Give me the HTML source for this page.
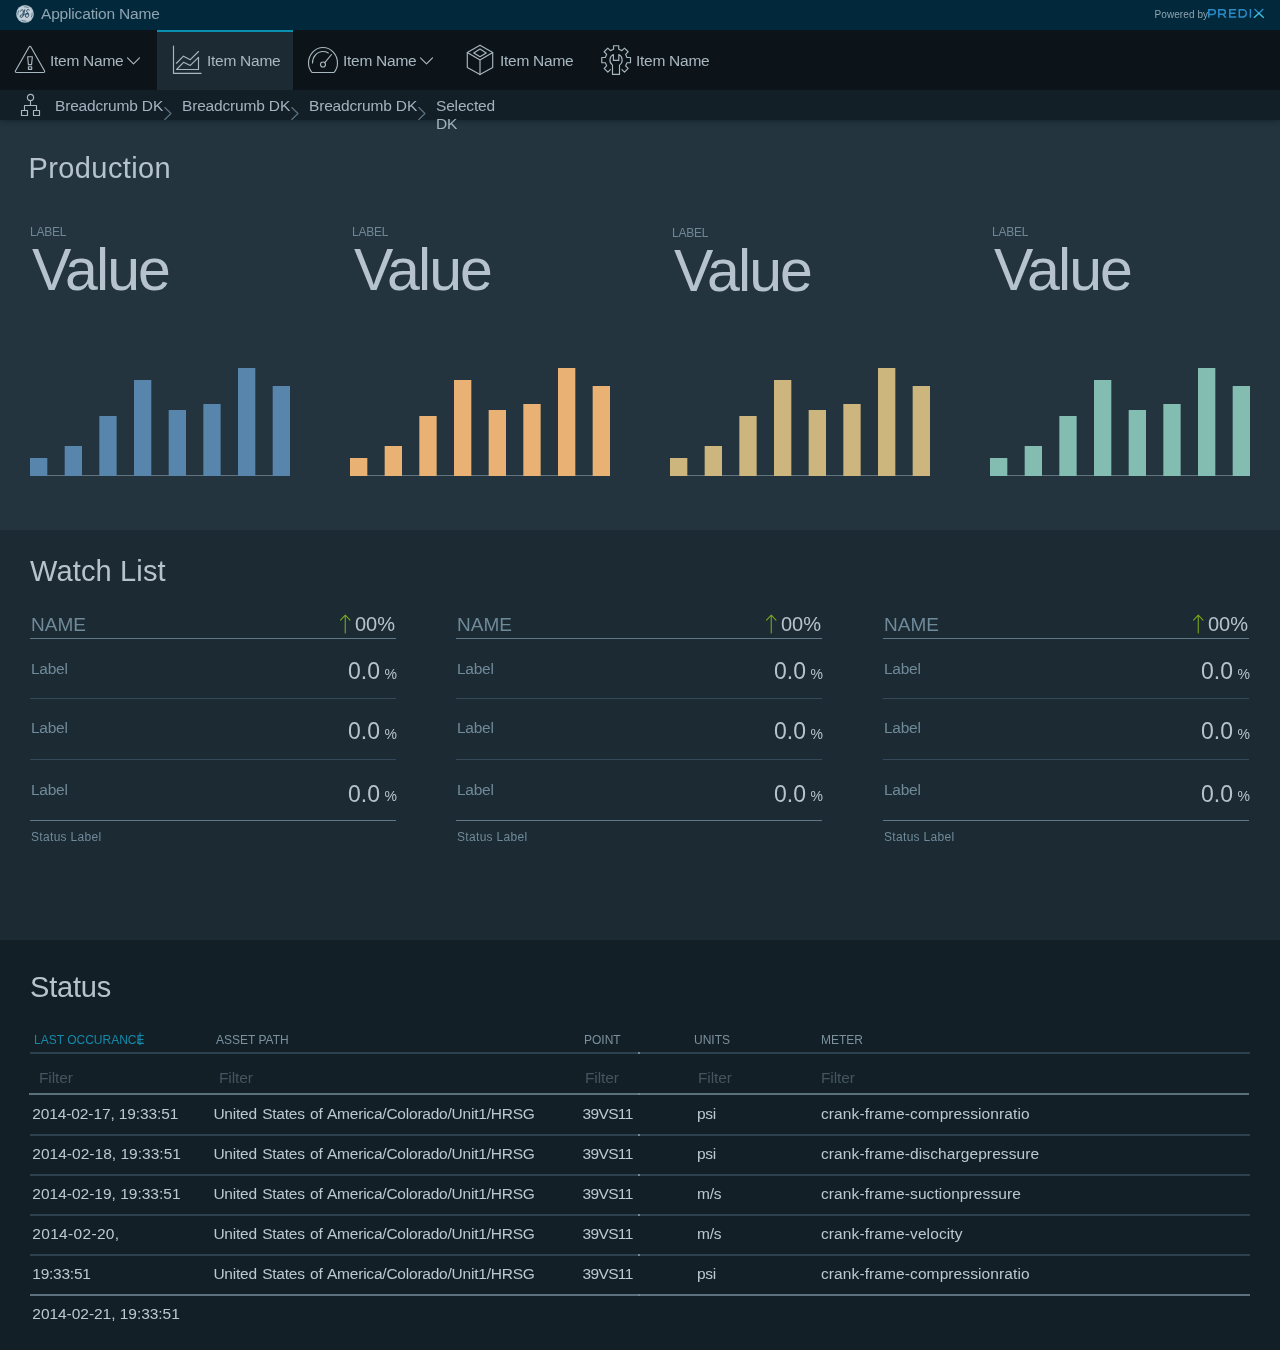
<!DOCTYPE html>
<html><head><meta charset="utf-8"><title>Dashboard</title>
<style>
*{box-sizing:border-box;margin:0;padding:0}
html,body{width:1280px;height:1350px;overflow:hidden;background:#121f27}
body{font-family:"Liberation Sans",sans-serif;position:relative;color:#b6c3cc}
#top,#nav,#crumbs,#prod,#watch,#status{will-change:transform}
.abs{position:absolute;white-space:nowrap}
#top{position:absolute;left:0;top:0;width:1280px;height:30px;background:#02293b}
#nav{z-index:6;position:absolute;left:0;top:30px;width:1280px;height:60px;background:#0c1419}
#crumbs{z-index:5;box-shadow:0 1px 5px rgba(0,0,0,.32);position:absolute;left:0;top:90px;width:1280px;height:30px;background:#121f27}
#prod{position:absolute;left:0;top:120px;width:1280px;height:410px;background:#23343f}
#watch{position:absolute;left:0;top:530px;width:1280px;height:410px;background:#1c2a33}
#status{position:absolute;left:0;top:940px;width:1280px;height:410px;background:#121f27}
.appname{left:41px;top:5px;font-size:15.500px;line-height:18px;color:#8fa3b0;letter-spacing:-.17px}
.powered{left:1154.500px;top:9px;font-size:10px;line-height:12px;color:#8fa3b0;letter-spacing:.08px}
.navtxt{font-size:15.500px;line-height:18px;color:#a9b7c1;top:22px;letter-spacing:-.27px}
.sel{position:absolute;left:157px;top:0;width:136px;height:60px;background:#1c2a33;border-top:2px solid #0a8fb0}
svg{position:absolute;overflow:visible}
.ic{fill:none;stroke:#a9b7c1;stroke-width:1.150;stroke-linecap:round;stroke-linejoin:round}
.bc{font-size:15.500px;line-height:18px;color:#a3b2be;top:7px;letter-spacing:-.17px}
.h1{font-size:29px;line-height:34px;color:#b6c3cc;left:30px}
.lab{font-size:12px;line-height:14px;color:#6f8795;letter-spacing:-.25px}
.val{font-size:59px;line-height:60px;color:#b6c3cc;letter-spacing:-1.9px}
.ln{position:absolute;height:1px}
.wname{font-size:19px;line-height:22px;color:#6f8a99}
.wpct{font-size:20px;line-height:22px;color:#b6c3cc}
.wlab{font-size:15.500px;line-height:18px;color:#6f8a99;letter-spacing:-.25px}
.wval{font-size:23px;line-height:26px;color:#b6c3cc}
.wsm{font-size:14px;line-height:16px;color:#b6c3cc}
.wst{font-size:12px;line-height:14px;color:#6f8a99;letter-spacing:.32px}
.th{font-size:12px;line-height:14px;color:#7b919e}
.fl{font-size:15.500px;line-height:18px;color:#44555f;letter-spacing:-.1px}
.td{font-size:15.500px;line-height:18px;color:#bcc8d0;letter-spacing:-.25px}
</style></head><body>
<div id="top">
<svg style="left:16px;top:5px" width="18" height="18" viewBox="0 0 18 18"><circle cx="9" cy="8.900" r="8.900" fill="#a9bcc8"/><circle cx="9" cy="8.900" r="7.900" fill="#c3d0d9"/><g fill="none" stroke="#1b4258" stroke-linecap="round"><circle cx="9" cy="8.900" r="7.100" stroke-width=".6" stroke-dasharray="4.200 6.950" stroke-dashoffset="1"/><path d="M4.300 6.300c.8-1.900 2.900-1.900 3.100-.3.200 1.500-1.100 2.500-.5 3.400M8.800 4.700C8 7.700 7.700 10.300 6.600 11.700c-.9 1.200-2.700.8-2.500-.6.200-1.300 2-1.700 2.900-.8" stroke-width=".95"/><path d="M13.200 4.900c-1-.8-2.400-.2-2.500 1-.1 1.100.8 1.600 1.400 2.400 1 1.300.8 3.300-.6 3.900-1.400.5-2.600-.7-2.100-2.100.4-1.300 2.100-1.700 3-.7M8.700 9.300l3.300-.9" stroke-width=".95"/></g></svg>
<div class="abs appname">Application Name</div>
<div class="abs powered">Powered by</div>
<svg style="left:1208px;top:9.300px" width="57" height="9" viewBox="0 0 57 9" fill="none" stroke="#2a8bc9" stroke-width="1.500" stroke-linejoin="miter"><path d="M.8 8.700V.8H5a2.300 2.300 0 0 1 0 4.600H.8"/><path d="M10.800 8.700V.8H15.100a2.250 2.250 0 0 1 0 4.500H10.800M14.900 5.300 17.800 8.700"/><path d="M28.200.8H21.800V7.900H28.200M21.800 4.350H27.400"/><path d="M31.300.8H34.800a3.550 3.550 0 0 1 0 7.100H31.300Z"/><path d="M42.400 0V8.700"/><path d="M46.500 0 50.900 4.200 55.300 0" stroke-width="1.350"/><path d="M46 8.700 50.900 4.200 55.800 8.700" stroke="#3fc4df" stroke-width="1.350"/></svg>
</div>
<div id="nav"><div class="sel"></div>
<svg style="left:14px;top:15px" width="32" height="30" viewBox="0 0 32 30" class="ic"><path d="M14.92 2.21Q16.00 0.30 17.08 2.21L30.32 25.59Q31.40 27.50 29.20 27.50L2.80 27.50Q0.60 27.50 1.68 25.59Z"/><path d="M13.650 11.700H18.350L17.550 19.650H14.400Z M14.400 21.700h3.300v2.600h-3.300z"/></svg>
<div class="abs navtxt" style="left:50px">Item Name</div><svg style="left:127px;top:27px" width="13" height="8" viewBox="0 0 13 8" class="ic"><path d="M.5.800 6.500 6.800 12.500.800"/></svg>
<svg style="left:172px;top:15px" width="30" height="30" viewBox="0 0 30 30" class="ic"><path d="M1.500 1.100V28.400H29.100"/><path d="M4.400 18.250 11.500 11.200 18.300 14.650 26.500 6.500"/><path d="M4.600 24.500 11.500 17.300 18.300 20.400 26.500 12.300V24.500Z"/></svg>
<div class="abs navtxt" style="left:207px">Item Name</div>
<svg style="left:307px;top:15px" width="32" height="30" viewBox="0 0 32 30" class="ic"><path d="M5 27.500h22c2.200-2.600 3.500-5.800 3.500-9.500C30.500 9.500 24 2.500 16 2.500S1.500 9.500 1.500 18c0 3.700 1.300 6.900 3.500 9.500Z"/><path d="M5.500 18C5.500 11.500 10 6.500 16 6.500c2 0 3.800.5 5.300 1.400"/><circle cx="16" cy="19.500" r="2.500"/><path d="M17.800 17.600 24.500 9.500"/></svg>
<div class="abs navtxt" style="left:343px">Item Name</div><svg style="left:420px;top:27px" width="13" height="8" viewBox="0 0 13 8" class="ic"><path d="M.5.800 6.500 6.800 12.500.800"/></svg>
<svg style="left:466px;top:14px" width="28" height="32" viewBox="0 0 28 32" class="ic"><path d="M14 1.200 26.700 8.500v15L14 30.600 1.300 23.500v-15Z"/><path d="M1.300 8.500 14 16 26.700 8.500M14 16v14.600"/><path d="M14 5 20.250 8.900 14 12.800 7.750 8.900Z"/></svg>
<div class="abs navtxt" style="left:500px">Item Name</div>
<svg style="left:600px;top:14px" width="32" height="32" viewBox="0 0 32 32" class="ic"><path d="M10.36 25.57 L7.83 28.10 L4.15 24.42 L6.68 21.89 L5.36 18.70 L1.78 18.70 L1.78 13.50 L5.36 13.50 L6.68 10.31 L4.15 7.78 L7.83 4.10 L10.36 6.63 L13.55 5.31 L13.55 1.73 L18.75 1.73 L18.75 5.31 L21.94 6.63 L24.47 4.10 L28.15 7.78 L25.62 10.31 L26.94 13.50 L30.52 13.50 L30.52 18.70 L26.94 18.70 L25.62 21.89 L28.15 24.42 L24.47 28.10 L21.94 25.57"/><path d="M13.400 10.550A6.150 6.150 0 0 0 12.500 21.100V30.400H19.500V21.100A6.150 6.150 0 0 0 18.800 10.550V16.400H13.400Z"/></svg>
<div class="abs navtxt" style="left:636px">Item Name</div>
</div>
<div id="crumbs">
<svg style="left:21px;top:3px" width="20" height="24" viewBox="0 0 20 24" class="ic"><circle cx="9.500" cy="4.400" r="3.100"/><path d="M9.500 7.500v5M3.500 17.500v-5h12v5"/><rect x=".5" y="17.500" width="6" height="5"/><rect x="12.500" y="17.500" width="6" height="5"/></svg>
<div class="abs bc" style="left:55px">Breadcrumb DK</div>
<svg style="left:164px;top:17px" width="8" height="13" viewBox="0 0 8 13" class="ic"><path d="M.8.500 7 6.500.8 12.500" stroke="#5b7282"/></svg>
<div class="abs bc" style="left:182px">Breadcrumb DK</div>
<svg style="left:291px;top:17px" width="8" height="13" viewBox="0 0 8 13" class="ic"><path d="M.8.500 7 6.500.8 12.500" stroke="#5b7282"/></svg>
<div class="abs bc" style="left:309px">Breadcrumb DK</div>
<svg style="left:418px;top:17px" width="8" height="13" viewBox="0 0 8 13" class="ic"><path d="M.8.500 7 6.500.8 12.500" stroke="#5b7282"/></svg>
<div class="abs bc" style="left:436px">Selected</div><div class="abs bc" style="left:436px;top:25px">DK</div>
</div>
<div id="prod"><div class="abs h1" style="top:31px;left:28.500px;letter-spacing:.4px">Production</div>
<div class="abs lab" style="left:30px;top:105px">LABEL</div>
<div class="abs val" style="left:32px;top:120px">Value</div>
<svg style="left:30px;top:236px" width="260" height="121" viewBox="0 0 260 121">
<rect x="0" y="119" width="260" height="1" fill="#5f7480"/>
<rect x="0.00" y="102" width="17.330" height="18" fill="#5785ab"/>
<rect x="34.67" y="90" width="17.330" height="30" fill="#5785ab"/>
<rect x="69.33" y="60" width="17.330" height="60" fill="#5785ab"/>
<rect x="104.00" y="24" width="17.330" height="96" fill="#5785ab"/>
<rect x="138.67" y="54" width="17.330" height="66" fill="#5785ab"/>
<rect x="173.33" y="48" width="17.330" height="72" fill="#5785ab"/>
<rect x="208.00" y="12" width="17.330" height="108" fill="#5785ab"/>
<rect x="242.67" y="30" width="17.330" height="90" fill="#5785ab"/>
</svg>
<div class="abs lab" style="left:352px;top:105px">LABEL</div>
<div class="abs val" style="left:354px;top:120px">Value</div>
<svg style="left:350px;top:236px" width="260" height="121" viewBox="0 0 260 121">
<rect x="0" y="119" width="260" height="1" fill="#5f7480"/>
<rect x="0.00" y="102" width="17.330" height="18" fill="#e9b274"/>
<rect x="34.67" y="90" width="17.330" height="30" fill="#e9b274"/>
<rect x="69.33" y="60" width="17.330" height="60" fill="#e9b274"/>
<rect x="104.00" y="24" width="17.330" height="96" fill="#e9b274"/>
<rect x="138.67" y="54" width="17.330" height="66" fill="#e9b274"/>
<rect x="173.33" y="48" width="17.330" height="72" fill="#e9b274"/>
<rect x="208.00" y="12" width="17.330" height="108" fill="#e9b274"/>
<rect x="242.67" y="30" width="17.330" height="90" fill="#e9b274"/>
</svg>
<div class="abs lab" style="left:672px;top:106px">LABEL</div>
<div class="abs val" style="left:674px;top:121px">Value</div>
<svg style="left:670px;top:236px" width="260" height="121" viewBox="0 0 260 121">
<rect x="0" y="119" width="260" height="1" fill="#5f7480"/>
<rect x="0.00" y="102" width="17.330" height="18" fill="#cdb67e"/>
<rect x="34.67" y="90" width="17.330" height="30" fill="#cdb67e"/>
<rect x="69.33" y="60" width="17.330" height="60" fill="#cdb67e"/>
<rect x="104.00" y="24" width="17.330" height="96" fill="#cdb67e"/>
<rect x="138.67" y="54" width="17.330" height="66" fill="#cdb67e"/>
<rect x="173.33" y="48" width="17.330" height="72" fill="#cdb67e"/>
<rect x="208.00" y="12" width="17.330" height="108" fill="#cdb67e"/>
<rect x="242.67" y="30" width="17.330" height="90" fill="#cdb67e"/>
</svg>
<div class="abs lab" style="left:992px;top:105px">LABEL</div>
<div class="abs val" style="left:994px;top:120px">Value</div>
<svg style="left:990px;top:236px" width="260" height="121" viewBox="0 0 260 121">
<rect x="0" y="119" width="260" height="1" fill="#5f7480"/>
<rect x="0.00" y="102" width="17.330" height="18" fill="#83bdb1"/>
<rect x="34.67" y="90" width="17.330" height="30" fill="#83bdb1"/>
<rect x="69.33" y="60" width="17.330" height="60" fill="#83bdb1"/>
<rect x="104.00" y="24" width="17.330" height="96" fill="#83bdb1"/>
<rect x="138.67" y="54" width="17.330" height="66" fill="#83bdb1"/>
<rect x="173.33" y="48" width="17.330" height="72" fill="#83bdb1"/>
<rect x="208.00" y="12" width="17.330" height="108" fill="#83bdb1"/>
<rect x="242.67" y="30" width="17.330" height="90" fill="#83bdb1"/>
</svg>
</div>
<div id="watch"><div class="abs h1" style="top:24px;letter-spacing:.15px">Watch List</div>
<div class="abs wname" style="left:31px;top:84px">NAME</div>
<svg style="left:339px;top:84px" width="12" height="20" viewBox="0 0 12 20" fill="none" stroke="#78a61c" stroke-width="1.100" stroke-linecap="round" stroke-linejoin="round"><path d="M6.250 19V1.200M1.500 6.200 6.250 1.200 11 6.200"/></svg>
<div class="abs wpct" style="right:885px;top:83px">00%</div>
<div class="ln" style="left:30px;width:366px;top:108px;background:#5f7888"></div>
<div class="ln" style="left:30px;width:366px;top:168px;background:#34495a"></div>
<div class="ln" style="left:30px;width:366px;top:229px;background:#34495a"></div>
<div class="ln" style="left:30px;width:366px;top:290px;background:#5f7888"></div>
<div class="abs wlab" style="left:31px;top:129.6px">Label</div>
<div class="abs wval" style="right:900px;top:128.1px">0.0</div>
<div class="abs wsm" style="right:883px;top:135.8px">%</div>
<div class="abs wlab" style="left:31px;top:188.9px">Label</div>
<div class="abs wval" style="right:900px;top:188.3px">0.0</div>
<div class="abs wsm" style="right:883px;top:196.0px">%</div>
<div class="abs wlab" style="left:31px;top:251.2px">Label</div>
<div class="abs wval" style="right:900px;top:250.6px">0.0</div>
<div class="abs wsm" style="right:883px;top:258.2px">%</div>
<div class="abs wst" style="left:31px;top:300px">Status Label</div>
<div class="abs wname" style="left:457px;top:84px">NAME</div>
<svg style="left:765px;top:84px" width="12" height="20" viewBox="0 0 12 20" fill="none" stroke="#78a61c" stroke-width="1.100" stroke-linecap="round" stroke-linejoin="round"><path d="M6.250 19V1.200M1.500 6.200 6.250 1.200 11 6.200"/></svg>
<div class="abs wpct" style="right:459px;top:83px">00%</div>
<div class="ln" style="left:456px;width:366px;top:108px;background:#5f7888"></div>
<div class="ln" style="left:456px;width:366px;top:168px;background:#34495a"></div>
<div class="ln" style="left:456px;width:366px;top:229px;background:#34495a"></div>
<div class="ln" style="left:456px;width:366px;top:290px;background:#5f7888"></div>
<div class="abs wlab" style="left:457px;top:129.6px">Label</div>
<div class="abs wval" style="right:474px;top:128.1px">0.0</div>
<div class="abs wsm" style="right:457px;top:135.8px">%</div>
<div class="abs wlab" style="left:457px;top:188.9px">Label</div>
<div class="abs wval" style="right:474px;top:188.3px">0.0</div>
<div class="abs wsm" style="right:457px;top:196.0px">%</div>
<div class="abs wlab" style="left:457px;top:251.2px">Label</div>
<div class="abs wval" style="right:474px;top:250.6px">0.0</div>
<div class="abs wsm" style="right:457px;top:258.2px">%</div>
<div class="abs wst" style="left:457px;top:300px">Status Label</div>
<div class="abs wname" style="left:884px;top:84px">NAME</div>
<svg style="left:1192px;top:84px" width="12" height="20" viewBox="0 0 12 20" fill="none" stroke="#78a61c" stroke-width="1.100" stroke-linecap="round" stroke-linejoin="round"><path d="M6.250 19V1.200M1.500 6.200 6.250 1.200 11 6.200"/></svg>
<div class="abs wpct" style="right:32px;top:83px">00%</div>
<div class="ln" style="left:883px;width:366px;top:108px;background:#5f7888"></div>
<div class="ln" style="left:883px;width:366px;top:168px;background:#34495a"></div>
<div class="ln" style="left:883px;width:366px;top:229px;background:#34495a"></div>
<div class="ln" style="left:883px;width:366px;top:290px;background:#5f7888"></div>
<div class="abs wlab" style="left:884px;top:129.6px">Label</div>
<div class="abs wval" style="right:47px;top:128.1px">0.0</div>
<div class="abs wsm" style="right:30px;top:135.8px">%</div>
<div class="abs wlab" style="left:884px;top:188.9px">Label</div>
<div class="abs wval" style="right:47px;top:188.3px">0.0</div>
<div class="abs wsm" style="right:30px;top:196.0px">%</div>
<div class="abs wlab" style="left:884px;top:251.2px">Label</div>
<div class="abs wval" style="right:47px;top:250.6px">0.0</div>
<div class="abs wsm" style="right:30px;top:258.2px">%</div>
<div class="abs wst" style="left:884px;top:300px">Status Label</div>
</div>
<div id="status"><div class="abs h1" style="top:30px;letter-spacing:-.2px">Status</div>
<div class="abs th" style="left:34px;top:93px;color:#1589a9">LAST OCCURANCE</div>
<div class="abs th" style="left:216px;top:93px">ASSET PATH</div>
<div class="abs th" style="left:584px;top:93px">POINT</div>
<div class="abs th" style="left:694px;top:93px">UNITS</div>
<div class="abs th" style="left:821px;top:93px">METER</div>
<svg style="left:135.500px;top:92px" width="8" height="14" viewBox="0 0 8 14" fill="none" stroke="#1589a9" stroke-width="1" stroke-linecap="round" stroke-linejoin="round"><path d="M4 1v11.500M1.500 10 4 12.500 6.500 10"/></svg>
<div class="abs fl" style="left:39px;top:129px">Filter</div>
<div class="abs fl" style="left:219px;top:129px">Filter</div>
<div class="abs fl" style="left:585px;top:129px">Filter</div>
<div class="abs fl" style="left:698px;top:129px">Filter</div>
<div class="abs fl" style="left:821px;top:129px">Filter</div>
<div class="ln" style="left:30px;width:1220px;top:112px;height:2px;background:#2c414e"></div>
<div class="ln" style="left:29px;width:1220px;top:153px;height:2px;background:#5b707d"></div>
<div class="abs td" style="left:32.3px;top:165px;letter-spacing:-0.12px">2014-02-17, 19:33:51</div>
<div class="abs td" style="left:213.4px;top:165px;letter-spacing:-.22px;word-spacing:1.200px">United States of America/Colorado/Unit1/HRSG</div>
<div class="abs td" style="left:582.5px;top:165px;letter-spacing:-.65px">39VS11</div>
<div class="abs td" style="left:697px;top:165px">psi</div>
<div class="abs td" style="left:821px;top:165px;letter-spacing:.1px">crank-frame-compressionratio</div>
<div class="ln" style="left:30px;width:1220px;top:194px;height:2px;background:#2c414e"></div>
<div class="abs td" style="left:32.3px;top:205px;letter-spacing:0.02px">2014-02-18, 19:33:51</div>
<div class="abs td" style="left:213.4px;top:205px;letter-spacing:-.22px;word-spacing:1.200px">United States of America/Colorado/Unit1/HRSG</div>
<div class="abs td" style="left:582.5px;top:205px;letter-spacing:-.65px">39VS11</div>
<div class="abs td" style="left:697px;top:205px">psi</div>
<div class="abs td" style="left:821px;top:205px;letter-spacing:.1px">crank-frame-dischargepressure</div>
<div class="ln" style="left:30px;width:1220px;top:234px;height:2px;background:#2c414e"></div>
<div class="abs td" style="left:32.3px;top:245px;letter-spacing:0.0px">2014-02-19, 19:33:51</div>
<div class="abs td" style="left:213.4px;top:245px;letter-spacing:-.22px;word-spacing:1.200px">United States of America/Colorado/Unit1/HRSG</div>
<div class="abs td" style="left:582.5px;top:245px;letter-spacing:-.65px">39VS11</div>
<div class="abs td" style="left:697px;top:245px">m/s</div>
<div class="abs td" style="left:821px;top:245px;letter-spacing:.1px">crank-frame-suctionpressure</div>
<div class="ln" style="left:30px;width:1220px;top:274px;height:2px;background:#2c414e"></div>
<div class="abs td" style="left:32.3px;top:285px;letter-spacing:0.32px">2014-02-20,</div>
<div class="abs td" style="left:213.4px;top:285px;letter-spacing:-.22px;word-spacing:1.200px">United States of America/Colorado/Unit1/HRSG</div>
<div class="abs td" style="left:582.5px;top:285px;letter-spacing:-.65px">39VS11</div>
<div class="abs td" style="left:697px;top:285px">m/s</div>
<div class="abs td" style="left:821px;top:285px;letter-spacing:.1px">crank-frame-velocity</div>
<div class="ln" style="left:30px;width:1220px;top:314px;height:2px;background:#2c414e"></div>
<div class="abs td" style="left:32.3px;top:325px;letter-spacing:-0.25px">19:33:51</div>
<div class="abs td" style="left:213.4px;top:325px;letter-spacing:-.22px;word-spacing:1.200px">United States of America/Colorado/Unit1/HRSG</div>
<div class="abs td" style="left:582.5px;top:325px;letter-spacing:-.65px">39VS11</div>
<div class="abs td" style="left:697px;top:325px">psi</div>
<div class="abs td" style="left:821px;top:325px;letter-spacing:.1px">crank-frame-compressionratio</div>
<div class="ln" style="left:30px;width:1220px;top:354px;height:2px;background:#5b707d"></div>
<div class="ln" style="left:638px;width:2px;top:112px;height:2px;background:#6d8593"></div>
<div class="ln" style="left:638px;width:2px;top:153px;height:2px;background:#6d8593"></div>
<div class="ln" style="left:638px;width:2px;top:194px;height:2px;background:#6d8593"></div>
<div class="ln" style="left:638px;width:2px;top:234px;height:2px;background:#6d8593"></div>
<div class="ln" style="left:638px;width:2px;top:274px;height:2px;background:#6d8593"></div>
<div class="ln" style="left:638px;width:2px;top:314px;height:2px;background:#6d8593"></div>
<div class="ln" style="left:638px;width:2px;top:354px;height:2px;background:#6d8593"></div>
<div class="abs td" style="left:32.3px;top:365px;letter-spacing:-0.04px">2014-02-21, 19:33:51</div>
</div>
</body></html>
